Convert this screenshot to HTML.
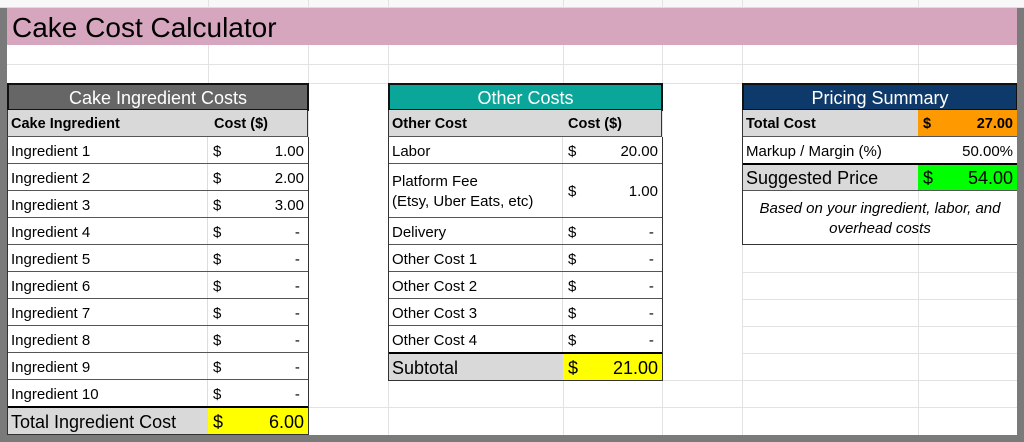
<!DOCTYPE html><html><head><meta charset="utf-8"><style>
*{box-sizing:border-box;margin:0;padding:0}
body{width:1024px;height:442px;position:relative;overflow:hidden;background:#fff;font-family:"Liberation Sans",Arial,sans-serif;color:#000}
.g{position:absolute;background:#e2e2e2}
.r{position:absolute;display:flex;font-size:15px;border-bottom:1px solid #555;background:#fff}
.r .a{display:flex;align-items:center;padding-left:3px;padding-top:2px;border-right:1px solid #ddd}
.r .b{display:flex;align-items:center;justify-content:space-between;padding:2px 4px 0 5px}
.h{position:absolute;display:flex;align-items:center;justify-content:center;color:#fff;font-size:18px;padding-top:2px;border:2px solid #111}
.box{position:absolute;border:1px solid #333;border-top:none}
.s{font-size:14.5px}
</style></head><body>
<div style="position:absolute;left:0;top:0;width:1024px;height:8px;background:#f8f8f8;border-bottom:1px solid #ddd"></div>
<div class="g" style="left:208px;top:0;width:1px;height:442px"></div>
<div class="g" style="left:308px;top:0;width:1px;height:442px"></div>
<div class="g" style="left:388px;top:0;width:1px;height:442px"></div>
<div class="g" style="left:563px;top:0;width:1px;height:442px"></div>
<div class="g" style="left:662px;top:0;width:1px;height:442px"></div>
<div class="g" style="left:742px;top:0;width:1px;height:442px"></div>
<div class="g" style="left:918px;top:0;width:1px;height:442px"></div>
<div class="g" style="left:0;top:64px;width:1024px;height:1px"></div>
<div class="g" style="left:0;top:83px;width:1024px;height:1px"></div>
<div class="g" style="left:662px;top:380px;width:362px;height:1px"></div>
<div class="g" style="left:308px;top:407px;width:720px;height:1px"></div>
<div class="g" style="left:742px;top:272px;width:280px;height:1px"></div>
<div class="g" style="left:742px;top:299px;width:280px;height:1px"></div>
<div class="g" style="left:742px;top:326px;width:280px;height:1px"></div>
<div class="g" style="left:742px;top:353px;width:280px;height:1px"></div>
<div style="position:absolute;left:7px;top:8px;width:1010px;height:37px;background:#d5a6bd;font-size:28px;padding-left:5px;line-height:40px">Cake Cost Calculator</div>

<div class="h" style="left:7px;top:83px;width:302px;height:28px;background:#666">Cake Ingredient Costs</div>
<div class="r s" style="left:7px;top:110px;width:301px;height:27px;background:#d9d9d9;font-weight:bold;border-left:1px solid #333;border-right:1px solid #333"><div class="a" style="width:201px;border:none">Cake Ingredient</div><div class="b">Cost ($)</div></div>
<div class="box" style="left:7px;top:137px;width:302px;height:298px"></div>
<div class="r" style="left:8px;top:137px;width:300px;height:27px"><div class="a" style="width:200px">Ingredient 1</div><div class="b" style="width:100px"><span>$</span><span>1.00</span></div></div>
<div class="r" style="left:8px;top:164px;width:300px;height:27px"><div class="a" style="width:200px">Ingredient 2</div><div class="b" style="width:100px"><span>$</span><span>2.00</span></div></div>
<div class="r" style="left:8px;top:191px;width:300px;height:27px"><div class="a" style="width:200px">Ingredient 3</div><div class="b" style="width:100px"><span>$</span><span>3.00</span></div></div>
<div class="r" style="left:8px;top:218px;width:300px;height:27px"><div class="a" style="width:200px">Ingredient 4</div><div class="b" style="width:100px"><span>$</span><span>-&nbsp;</span></div></div>
<div class="r" style="left:8px;top:245px;width:300px;height:27px"><div class="a" style="width:200px">Ingredient 5</div><div class="b" style="width:100px"><span>$</span><span>-&nbsp;</span></div></div>
<div class="r" style="left:8px;top:272px;width:300px;height:27px"><div class="a" style="width:200px">Ingredient 6</div><div class="b" style="width:100px"><span>$</span><span>-&nbsp;</span></div></div>
<div class="r" style="left:8px;top:299px;width:300px;height:27px"><div class="a" style="width:200px">Ingredient 7</div><div class="b" style="width:100px"><span>$</span><span>-&nbsp;</span></div></div>
<div class="r" style="left:8px;top:326px;width:300px;height:27px"><div class="a" style="width:200px">Ingredient 8</div><div class="b" style="width:100px"><span>$</span><span>-&nbsp;</span></div></div>
<div class="r" style="left:8px;top:353px;width:300px;height:27px"><div class="a" style="width:200px">Ingredient 9</div><div class="b" style="width:100px"><span>$</span><span>-&nbsp;</span></div></div>
<div class="r" style="left:8px;top:380px;width:300px;height:28px;border-bottom:2px solid #000"><div class="a" style="width:200px">Ingredient 10</div><div class="b" style="width:100px"><span>$</span><span>-&nbsp;</span></div></div>
<div class="r" style="left:8px;top:408px;width:300px;height:26px;background:#d9d9d9;font-size:18px;border:none"><div class="a" style="width:200px;border:none">Total Ingredient Cost</div><div class="b" style="width:100px;background:#ff0"><span>$</span><span>6.00</span></div></div>

<div class="h" style="left:388px;top:83px;width:275px;height:28px;background:#0aa69a">Other Costs</div>
<div class="r s" style="left:388px;top:110px;width:274px;height:27px;background:#d9d9d9;font-weight:bold;border-left:1px solid #333;border-right:1px solid #333"><div class="a" style="width:174px;border:none">Other Cost</div><div class="b">Cost ($)</div></div>
<div class="box" style="left:388px;top:137px;width:275px;height:244px"></div>
<div class="r" style="left:389px;top:137px;width:273px;height:27px"><div class="a" style="width:174px">Labor</div><div class="b" style="width:99px"><span>$</span><span>20.00</span></div></div>
<div class="r" style="left:389px;top:164px;width:273px;height:54px"><div class="a" style="width:174px;line-height:20px">Platform Fee<br>(Etsy, Uber Eats, etc)</div><div class="b" style="width:99px"><span>$</span><span>1.00</span></div></div>
<div class="r" style="left:389px;top:218px;width:273px;height:27px"><div class="a" style="width:174px">Delivery</div><div class="b" style="width:99px"><span>$</span><span>-&nbsp;</span></div></div>
<div class="r" style="left:389px;top:245px;width:273px;height:27px"><div class="a" style="width:174px">Other Cost 1</div><div class="b" style="width:99px"><span>$</span><span>-&nbsp;</span></div></div>
<div class="r" style="left:389px;top:272px;width:273px;height:27px"><div class="a" style="width:174px">Other Cost 2</div><div class="b" style="width:99px"><span>$</span><span>-&nbsp;</span></div></div>
<div class="r" style="left:389px;top:299px;width:273px;height:27px"><div class="a" style="width:174px">Other Cost 3</div><div class="b" style="width:99px"><span>$</span><span>-&nbsp;</span></div></div>
<div class="r" style="left:389px;top:326px;width:273px;height:28px;border-bottom:2px solid #000"><div class="a" style="width:174px">Other Cost 4</div><div class="b" style="width:99px"><span>$</span><span>-&nbsp;</span></div></div>
<div class="r" style="left:389px;top:354px;width:273px;height:26px;background:#d9d9d9;font-size:18px;border:none"><div class="a" style="width:174px;border:none">Subtotal</div><div class="b" style="width:99px;background:#ff0"><span>$</span><span>21.00</span></div></div>

<div class="h" style="left:742px;top:83px;width:276px;height:28px;background:#0e3a6b">Pricing Summary</div>
<div class="box" style="left:742px;top:110px;width:276px;height:135px;border-top:none"></div>
<div class="r s" style="left:743px;top:110px;width:274px;height:27px;background:#d9d9d9;font-weight:bold"><div class="a" style="width:175px;border:none">Total Cost</div><div class="b" style="width:99px;background:#ff9900"><span>$</span><span>27.00</span></div></div>
<div class="r" style="left:743px;top:137px;width:274px;height:28px;border-bottom:2px solid #000"><div class="a" style="width:175px;border:none">Markup / Margin (%)</div><div class="b" style="width:99px;justify-content:flex-end"><span>50.00%</span></div></div>
<div class="r" style="left:743px;top:165px;width:274px;height:26px;background:#d9d9d9;font-size:18px"><div class="a" style="width:175px;border:none">Suggested Price</div><div class="b" style="width:99px;background:#00ff00"><span>$</span><span>54.00</span></div></div>
<div style="position:absolute;left:743px;top:191px;width:274px;height:53px;display:flex;align-items:center;justify-content:center;text-align:center;font-style:italic;font-size:15px;line-height:20px;padding-top:2px">Based on your ingredient, labor, and<br>overhead costs</div>

<div style="position:absolute;left:0;top:8px;width:7px;height:434px;background:#7a7a7a"></div>
<div style="position:absolute;left:1017px;top:8px;width:7px;height:434px;background:#7a7a7a"></div>
<div style="position:absolute;left:0;top:435px;width:1024px;height:7px;background:#7a7a7a"></div>
</body></html>
